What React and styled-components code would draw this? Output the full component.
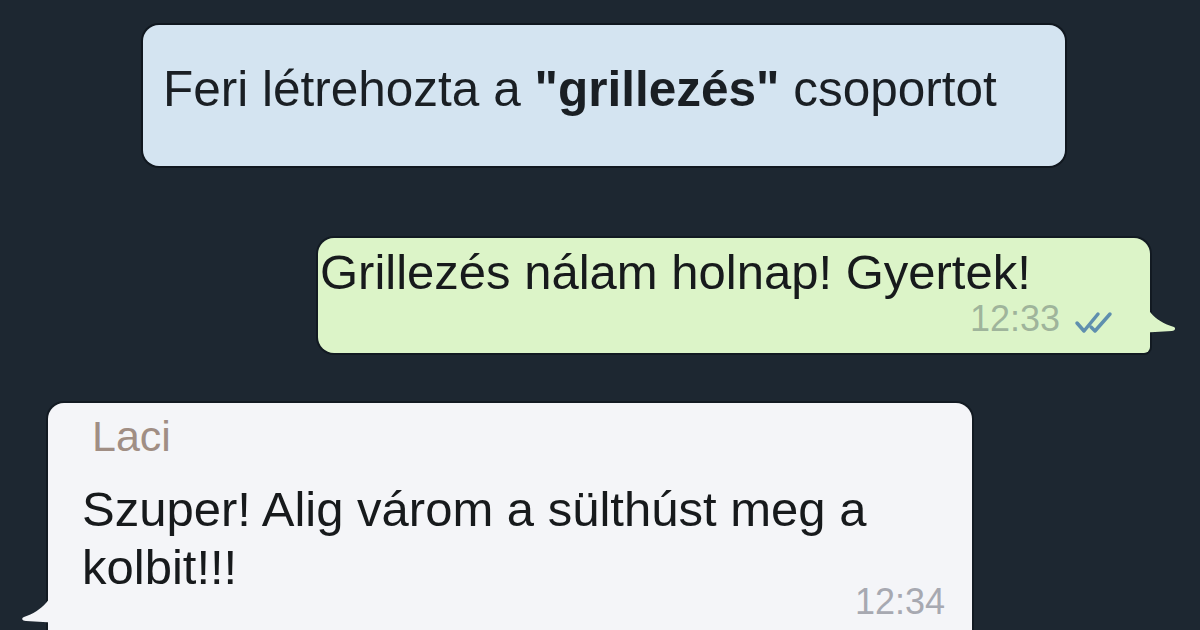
import React from "react";
import styled, { createGlobalStyle } from "styled-components";

const GlobalStyle = createGlobalStyle`
  html, body {
    margin: 0;
    padding: 0;
    background: #1d2731;
  }
  body {
    font-family: "Liberation Sans", Arial, sans-serif;
  }
`;

const messages = {
  system: { before: "Feri létrehozta a ", bold: "\"grillezés\"", after: " csoportot" },
  outgoing: { text: "Grillezés nálam holnap! Gyertek!", time: "12:33" },
  incoming: {
    author: "Laci",
    text: "Szuper! Alig várom a sülthúst meg a kolbit!!!",
    time: "12:34",
  },
};

const App = () => {
  const { system, outgoing, incoming } = messages;

  return (
    <>
      <GlobalStyle />
      <Chat>
        <SystemBubble>
          <SystemText>
            {system.before}
            <b>{system.bold}</b>
            {system.after}
          </SystemText>
        </SystemBubble>

        <OutBubble>
          <MessageText>{outgoing.text}</MessageText>
          <Meta tone="green">
            {outgoing.time}
            <Ticks />
          </Meta>
        </OutBubble>

        <InBubble>
          <Author>{incoming.author}</Author>
          <MessageText>{incoming.text}</MessageText>
          <Meta tone="gray" offset={-12}>
            {incoming.time}
          </Meta>
        </InBubble>
      </Chat>
    </>
  );
};

const Ticks = () => (
  <TickIcon viewBox="0 0 46 24" aria-hidden="true">
    <path d="M3 13 L10 21 L24 4" />
    <path d="M17 17 L21 21 L36 4" />
  </TickIcon>
);

const Chat = styled.div`
  width: 1200px;
  height: 630px;
  overflow: hidden;
  display: flex;
  flex-direction: column;
  background: #1d2731;
  color: #161a1c;

  & > * {
    flex-shrink: 0;
  }
`;

const SystemBubble = styled.div`
  margin: 25px 0 0 143px;
  width: 922px;
  height: 141px;
  box-sizing: border-box;
  padding: 0 0 14px 20px;
  display: flex;
  align-items: center;
  background: #d4e4f1;
  border-radius: 16px;
  box-shadow: 0 0 0 2px rgba(8, 14, 20, 0.6);
`;

const SystemText = styled.div`
  font-size: 49.5px;
  line-height: 1.2;
  white-space: nowrap;
  color: #1a1f24;
  b {
    font-weight: 700;
  }
`;

const OutBubble = styled.div`
  position: relative;
  align-self: flex-end;
  margin: 72px 50px 0 0;
  width: 832px;
  box-sizing: border-box;
  padding: 5px 30px 16px 2px;
  background: #dcf4c8;
  border-radius: 16px 16px 6px 16px;
  box-shadow: 0 0 0 2px rgba(8, 14, 20, 0.5);

  &::after {
    content: "";
    position: absolute;
    right: -28px;
    bottom: 20px;
    width: 40px;
    height: 48px;
    background: #dcf4c8;
    clip-path: path("M0 0 C 6 24, 16 36, 36 42 C 38 43, 37 46, 34 46 L0 48 Z");
  }
`;

const InBubble = styled.div`
  position: relative;
  margin: 50px 0 0 48px;
  width: 924px;
  min-height: 260px;
  box-sizing: border-box;
  padding: 8px 27px 20px 34px;
  background: #f4f5f8;
  border-radius: 16px 16px 16px 6px;
  box-shadow: 0 0 0 2px rgba(8, 14, 20, 0.5);

  &::before {
    content: "";
    position: absolute;
    left: -28px;
    top: 170px;
    width: 40px;
    height: 50px;
    background: #f4f5f8;
    clip-path: path("M40 0 C 34 26, 22 38, 4 44 C 1 45, 2 48, 6 48 L40 50 Z");
  }
`;

const Author = styled.div`
  padding-left: 10px;
  font-size: 43px;
  line-height: 1.2;
  color: #a08e84;
`;

const MessageText = styled.div`
  max-width: 840px;
  font-size: 49px;
  line-height: 58px;
  white-space: pre-wrap;
  color: #171a1c;

  ${Author} + & {
    margin-top: 17px;
  }
`;

const Meta = styled.div`
  display: flex;
  justify-content: flex-end;
  align-items: center;
  gap: 14px;
  margin-top: ${(props) => props.offset || 0}px;
  font-size: 36px;
  line-height: 36px;
  color: ${(props) => (props.tone === "green" ? "#9fb49b" : "#a7a9b1")};
`;

const TickIcon = styled.svg`
  width: 46px;
  height: 24px;
  margin-top: 6px;
  fill: none;
  stroke: #5f8fae;
  stroke-width: 3.5;
  stroke-linecap: round;
  stroke-linejoin: round;
`;

export default App;
